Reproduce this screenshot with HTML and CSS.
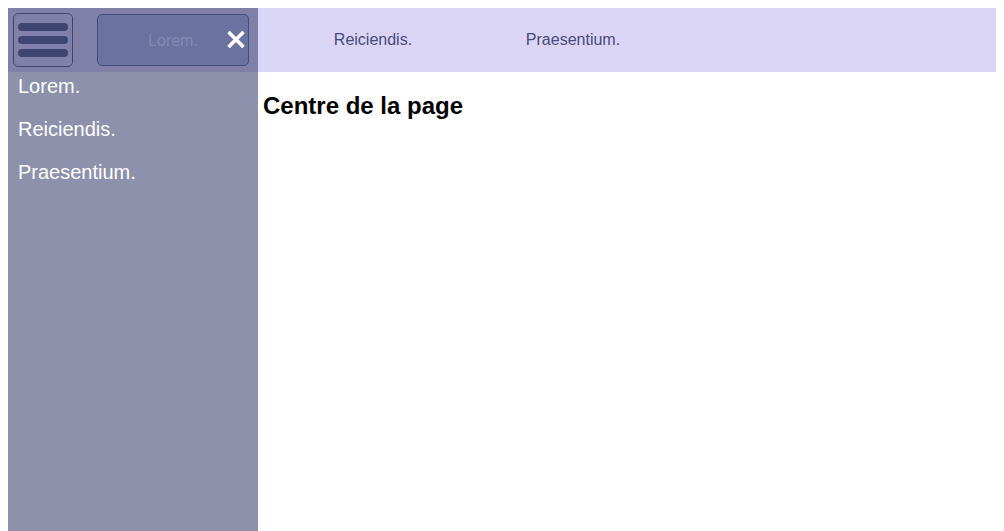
FILE: index.html
```html
<!DOCTYPE html>
<html lang="fr">
<head>
<meta charset="utf-8">
<title>Centre de la page</title>
<link rel="stylesheet" href="styles.css">
</head>
<body>
<div class="page">
  <header class="topbar">
    <div class="burger-slot"></div>
    <nav class="topnav">
      <a class="topnav-item" href="#">Lorem.</a>
      <a class="topnav-item" href="#">Reiciendis.</a>
      <a class="topnav-item" href="#">Praesentium.</a>
    </nav>
  </header>
  <main class="content">
    <h2 class="title">Centre de la page</h2>
  </main>
  <aside class="drawer">
    <div class="drawer-top">
      <button class="burger" type="button" aria-label="Menu">
        <span class="bar"></span>
        <span class="bar"></span>
        <span class="bar"></span>
      </button>
      <div class="active-item">
        <span class="active-label">Lorem.</span>
        <svg class="close" width="18" height="17" viewBox="0 0 18 17" aria-hidden="true">
          <path d="M1.5 1 L16.5 16 M16.5 1 L1.5 16" stroke="#ffffff" stroke-width="3.6" stroke-linecap="butt"/>
        </svg>
      </div>
    </div>
    <ul class="drawer-list">
      <li><a href="#">Lorem.</a></li>
      <li><a href="#">Reiciendis.</a></li>
      <li><a href="#">Praesentium.</a></li>
    </ul>
  </aside>
</div>
</body>
</html>
```

FILE: styles.css
```css
body {
  margin: 8px 8px 0;
  font-family: "Liberation Sans", Arial, sans-serif;
  background: #ffffff;
}
.page {
  position: relative;
  min-height: 523px;
}
.topbar {
  display: flex;
  align-items: center;
  height: 64px;
  background: #dbd5f5;
  padding: 0 5px;
}
.burger-slot {
  width: 60px;
  flex: none;
}
.topnav {
  display: flex;
}
.topnav-item {
  width: 200px;
  text-align: center;
  font-size: 16px;
  color: #464a7c;
  text-decoration: none;
}
.content {
  padding-left: 255px;
}
.title {
  margin: 20px 0;
  font-size: 24px;
  font-weight: bold;
  color: #000000;
}
.drawer {
  position: absolute;
  top: 0;
  bottom: 0;
  left: 0;
  width: 250px;
  background: #8e91ab;
}
.drawer-top {
  display: flex;
  align-items: center;
  height: 64px;
  background: #8080a8;
  padding: 0 9px 0 5px;
  box-sizing: border-box;
}
.burger {
  width: 60px;
  height: 54px;
  box-sizing: border-box;
  border: 1px solid #3f4470;
  border-radius: 5px;
  background: transparent;
  padding: 9px 4px;
  display: flex;
  flex-direction: column;
  justify-content: space-between;
  cursor: pointer;
}
.bar {
  display: block;
  height: 8px;
  border-radius: 4px;
  background: #3f4571;
}
.active-item {
  margin-left: 24px;
  flex: 1;
  height: 52px;
  box-sizing: border-box;
  border: 1px solid #474c7e;
  border-radius: 5px;
  background: #6b72a0;
  display: flex;
  align-items: center;
  justify-content: center;
  position: relative;
}
.active-label {
  font-size: 16px;
  padding-top: 2px;
  color: #8489b1;
}
.close {
  position: absolute;
  right: 3px;
  top: 16px;
}
.drawer-list {
  list-style: none;
  margin: 0;
  padding: 0 10px;
}
.drawer-list li {
  height: 43px;
}
.drawer-list a {
  display: block;
  font-size: 20px;
  line-height: 28px;
  color: #ffffff;
  text-decoration: none;
}
```
